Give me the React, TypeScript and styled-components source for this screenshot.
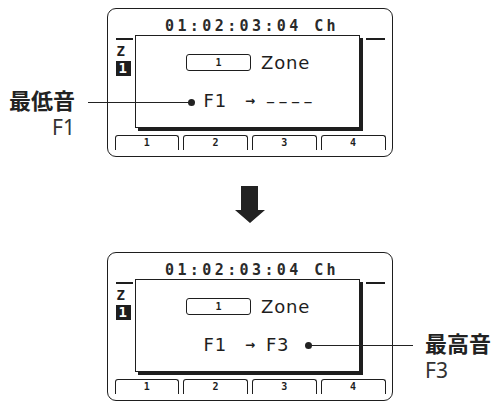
import styled, { createGlobalStyle } from 'styled-components'

const GlobalStyle = createGlobalStyle`
  html, body {
    margin: 0;
    padding: 0;
    background: #fff;
  }
  body {
    font-family: 'Noto Sans', 'Noto Sans CJK JP', sans-serif;
    color: #222;
  }
`

const ink = '#1e1e1e'

const Page = styled.div`
  width: 493px;
  height: 401px;
  overflow: hidden;
`

const Row = styled.div<{ $top: number }>`
  position: relative;
  display: grid;
  grid-template-columns: 107px 286px 1fr;
  align-items: start;
  padding-top: ${p => p.$top}px;
`

const Label = styled.div<{ $side: 'left' | 'right' }>`
  grid-column: ${p => (p.$side === 'left' ? 1 : 3)};
  grid-row: 1;
  margin-top: ${p => (p.$side === 'left' ? 78 : 77)}px;
  padding: ${p => (p.$side === 'left' ? '0 32px 0 0' : '0 0 0 32px')};
  text-align: ${p => (p.$side === 'left' ? 'right' : 'left')};
  white-space: nowrap;
`

const LabelTitle = styled.div`
  font-family: 'Noto Sans CJK JP', 'Noto Sans', sans-serif;
  font-weight: 700;
  font-size: 22px;
  line-height: 26px;
  color: #222;
`

const LabelNote = styled.div`
  font-family: 'Noto Sans', sans-serif;
  font-size: 21px;
  line-height: 22px;
  margin-top: 4px;
  color: #333;
`

const Callout = styled.div<{ $left: number; $top: number; $width: number; $dot: 'start' | 'end' }>`
  position: absolute;
  left: ${p => p.$left}px;
  top: ${p => p.$top}px;
  width: ${p => p.$width}px;
  height: 0;
  border-top: 1.3px solid #222;

  &::after {
    content: '';
    position: absolute;
    top: -4px;
    ${p => (p.$dot === 'end' ? 'right: -3.5px;' : 'left: -3.5px;')}
    width: 7px;
    height: 7px;
    border-radius: 50%;
    background: #222;
  }
`

const Panel = styled.div`
  grid-column: 2;
  grid-row: 1;
  box-sizing: border-box;
  width: 286px;
  height: 149px;
  border: 1.5px solid ${ink};
  border-radius: 9px;
  padding: 0 6.5px 0 7.5px;
  display: flex;
  flex-direction: column;
  overflow: hidden;
  background: #fff;
`

const Header = styled.div`
  height: 25.5px;
  display: flex;
  align-items: flex-end;
  justify-content: center;
  font-family: 'DejaVu Sans Mono', 'Liberation Mono', monospace;
  font-weight: 700;
  font-size: 15px;
  line-height: 17px;
  letter-spacing: 3.4px;
  color: #2a2a2a;
  padding-left: 3px;
`

const Middle = styled.div`
  display: flex;
  height: 96px;
`

const Strip = styled.div<{ $width: number; $gap: number }>`
  width: ${p => p.$width}px;
  flex: none;
  margin-left: ${p => p.$gap}px;
  display: flex;
  flex-direction: column;
  align-items: flex-start;
`

const Dash = styled.div`
  align-self: stretch;
  height: 1.5px;
  background: ${ink};
  margin-top: 3.5px;
`

const ScreenChar = styled.div<{ $inverse?: boolean }>`
  font-family: 'DejaVu Sans Mono', 'Liberation Mono', monospace;
  font-weight: 700;
  font-size: 14px;
  line-height: 15px;
  white-space: nowrap;
  margin-top: ${p => (p.$inverse ? 2 : 4)}px;
  color: ${p => (p.$inverse ? '#fff' : ink)};
  background: ${p => (p.$inverse ? ink : 'transparent')};
  padding: ${p => (p.$inverse ? '0 4px 0 3px' : '0 0 0 1px')};
`

const Dialog = styled.div`
  box-sizing: border-box;
  width: 225px;
  height: 93px;
  flex: none;
  margin-left: 2px;
  border: 1.5px solid ${ink};
  box-shadow: 3px 3px 0 ${ink};
  background: #fff;
  display: flex;
  flex-direction: column;
`

const ZoneRow = styled.div`
  display: flex;
  align-items: center;
  height: 17px;
  margin: 18.5px 0 0 50.5px;
  gap: 10px;
`

const ZoneBox = styled.div`
  box-sizing: border-box;
  width: 65px;
  height: 17px;
  border: 1.5px solid ${ink};
  border-radius: 3px;
  display: flex;
  align-items: center;
  justify-content: center;
  font-family: 'DejaVu Sans Mono', 'Liberation Mono', monospace;
  font-weight: 700;
  font-size: 10px;
  color: ${ink};
`

const LcdText = styled.span`
  font-family: 'DejaVu Sans', 'Liberation Sans', sans-serif;
  font-size: 18px;
  line-height: 22px;
  letter-spacing: 0.8px;
  color: ${ink};
`

const NoteRow = styled.div`
  display: flex;
  align-items: center;
  height: 22px;
  margin: 19px 0 0 68px;
`

const SmallArrow = styled.span`
  font-family: 'DejaVu Sans', sans-serif;
  font-weight: 700;
  font-size: 12px;
  line-height: 22px;
  width: 10px;
  margin: 0 11px 0 18px;
  color: ${ink};
`

const Dashes = styled.span`
  font-family: 'DejaVu Sans', 'Liberation Sans', sans-serif;
  font-size: 18px;
  line-height: 22px;
  letter-spacing: 3.5px;
  color: ${ink};
`

const Tabs = styled.div`
  display: grid;
  grid-template-columns: repeat(4, 1fr);
  gap: 4px;
  margin: 4px 0 0 -1px;
  height: 15px;
`

const Tab = styled.div`
  box-sizing: border-box;
  border: 1.5px solid ${ink};
  border-bottom: none;
  border-radius: 3px 3px 0 0;
  display: flex;
  justify-content: center;
  font-family: 'DejaVu Sans Mono', 'Liberation Mono', monospace;
  font-weight: 700;
  font-size: 10px;
  line-height: 13px;
  color: ${ink};
`

const ArrowBlock = styled.div`
  height: 95px;
  width: 286px;
  margin-left: 107px;
  display: flex;
  justify-content: center;
  padding-top: 29px;
  box-sizing: border-box;
`

function DownArrow() {
  return (
    <svg width="30" height="37" viewBox="0 0 30 37">
      <path d="M6 0H23V24H30L15 37L0 24H6Z" fill="#222" />
    </svg>
  )
}

function Lcd({ children }: { children: React.ReactNode }) {
  return (
    <Panel>
      <Header>01:02:03:04 Ch</Header>
      <Middle>
        <Strip $width={17} $gap={0}>
          <Dash />
          <ScreenChar>Z</ScreenChar>
          <ScreenChar $inverse>1</ScreenChar>
        </Strip>
        <Dialog>
          <ZoneRow>
            <ZoneBox>1</ZoneBox>
            <LcdText>Zone</LcdText>
          </ZoneRow>
          <NoteRow>{children}</NoteRow>
        </Dialog>
        <Strip $width={19} $gap={6}>
          <Dash />
        </Strip>
      </Middle>
      <Tabs>
        {['1', '2', '3', '4'].map(n => (
          <Tab key={n}>{n}</Tab>
        ))}
      </Tabs>
    </Panel>
  )
}

export default function App() {
  return (
    <Page>
      <GlobalStyle />
      <Row $top={8}>
        <Label $side="left">
          <LabelTitle>最低音</LabelTitle>
          <LabelNote>F1</LabelNote>
        </Label>
        <Lcd>
          <LcdText>F1</LcdText>
          <SmallArrow>→</SmallArrow>
          <Dashes>––––</Dashes>
        </Lcd>
        <Callout $left={88} $top={101.5} $width={103} $dot="end" />
      </Row>
      <ArrowBlock>
        <DownArrow />
      </ArrowBlock>
      <Row $top={0}>
        <Lcd>
          <LcdText>F1</LcdText>
          <SmallArrow>→</SmallArrow>
          <LcdText>F3</LcdText>
        </Lcd>
        <Label $side="right">
          <LabelTitle>最高音</LabelTitle>
          <LabelNote>F3</LabelNote>
        </Label>
        <Callout $left={308} $top={93} $width={105} $dot="start" />
      </Row>
    </Page>
  )
}
